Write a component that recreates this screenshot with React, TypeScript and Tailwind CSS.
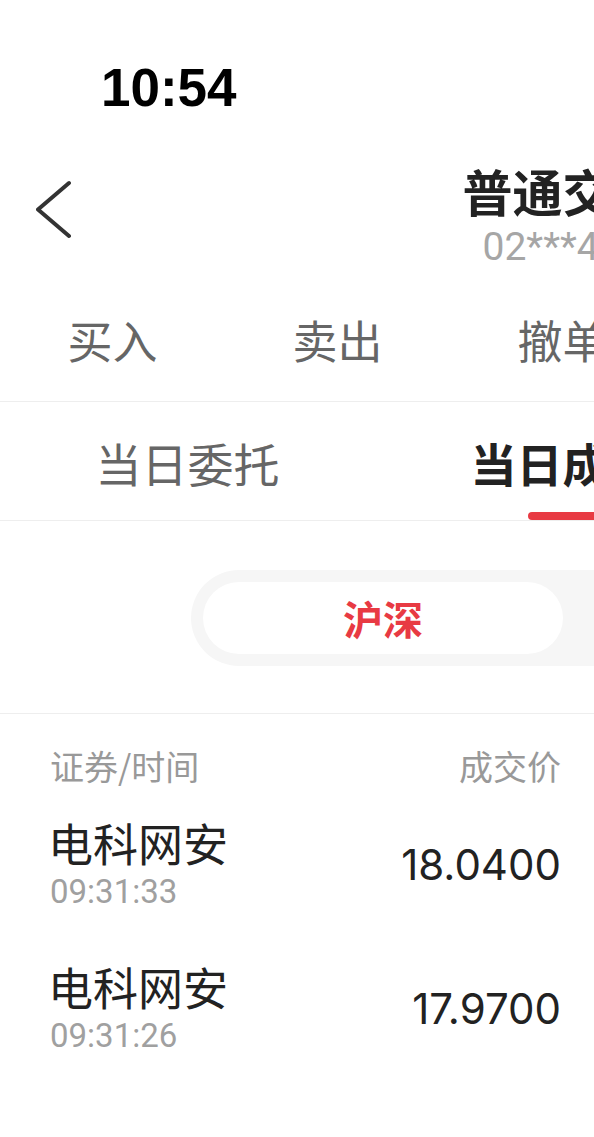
import React from "react";

const CJK = { fontFamily: '"Noto Sans CJK SC", "Noto Sans", sans-serif' };
const NUM = { fontFamily: 'Roboto, "Noto Sans CJK SC", sans-serif' };
const PRICE = { fontFamily: 'Inter, Roboto, "Noto Sans CJK SC", sans-serif' };

function Chevron() {
  return (
    <svg width="36" height="60" viewBox="0 0 36 60" fill="none">
      <path
        d="M33 3 L2 29.5 L33 56"
        stroke="#333333"
        strokeWidth="4"
        strokeLinecap="round"
        strokeLinejoin="round"
      />
    </svg>
  );
}

const tabs = ["买入", "卖出", "撤单", "持仓", "查询"];
const subTabs = ["当日委托", "当日成交", "历史委托"];
const rows = [
  { name: "电科网安", time: "09:31:33", price: "18.0400", vol: "100", amt: "1804.00" },
  { name: "电科网安", time: "09:31:26", price: "17.9700", vol: "100", amt: "1797.00" },
];

export default function App() {
  return (
    <div className="w-[594px] h-[1137px] overflow-hidden bg-white" style={CJK}>
      <div className="w-[1125px]">
        {/* status bar */}
        <div className="h-[140px] pl-[101px] pt-[62px]">
          <span
            className="text-[53px] leading-[52px] font-bold text-black"
            style={{ fontFamily: '"Liberation Sans", Arial, sans-serif' }}
          >
            10:54
          </span>
        </div>

        {/* nav bar */}
        <div className="h-[150px] grid grid-cols-[1fr_auto_1fr]">
          <div className="pl-[36px] pt-[40px]">
            <Chevron />
          </div>
          <div className="flex flex-col items-center pt-[22px]">
            <div className="text-[50px] leading-[56px] font-bold text-[#222222]">普通交易</div>
            <div className="text-[39px] leading-[48px] mt-[5px] text-[#a6a6a6]" style={NUM}>
              02***456
            </div>
          </div>
          <div />
        </div>

        {/* main tabs */}
        <div className="h-[112px] flex border-b border-[#eeeeee]">
          {tabs.map((t) => (
            <div key={t} className="w-[225px] flex justify-center pt-[22px]">
              <span className="text-[45px] leading-[56px] text-[#666666]">{t}</span>
            </div>
          ))}
        </div>

        {/* sub tabs */}
        <div className="h-[119px] flex border-b border-[#eeeeee]">
          {subTabs.map((t, i) => (
            <div key={t} className="w-[375px] flex flex-col items-center pt-[32px]">
              <span
                className={
                  i === 1
                    ? "text-[46px] leading-[56px] font-bold text-[#222222]"
                    : "text-[46px] leading-[56px] text-[#666666]"
                }
              >
                {t}
              </span>
              <div className="flex-1" />
              {i === 1 ? (
                <div className="w-[70px] h-[8px] rounded-full bg-[#e83a43]" />
              ) : null}
            </div>
          ))}
        </div>

        {/* segmented */}
        <div className="pt-[49px] pb-[47px] flex justify-center border-b border-[#eeeeee]">
          <div className="w-[743px] h-[96px] p-[12px] rounded-full bg-[#f6f6f6] flex">
            <div className="w-[360px] h-[72px] rounded-full bg-white flex items-center justify-center">
              <span className="text-[40px] leading-[48px] font-bold text-[#e83a43]">沪深</span>
            </div>
            <div className="flex-1 flex items-center justify-center">
              <span className="text-[40px] leading-[48px] text-[#666666]">港股通</span>
            </div>
          </div>
        </div>

        {/* header */}
        <div className="pt-[32px] pb-[31px] pl-[50px] flex text-[34px] leading-[40px] text-[#999999]">
          <div className="w-[511px] flex justify-between">
            <span>证券/时间</span>
            <span>成交价</span>
          </div>
          <div className="w-[270px] text-right">成交量</div>
          <div className="w-[270px] text-right">成交金额</div>
        </div>

        {/* rows */}
        {rows.map((r, idx) => (
          <div key={idx} className="h-[144px] pl-[50px] flex items-start">
            <div className="w-[511px] flex items-center justify-between">
              <div className="flex flex-col">
                <span className="text-[45px] leading-[52px] -ml-[2px] text-[#222222]">{r.name}</span>
                <span className="text-[33px] leading-[40px] mt-[3px] text-[#a0a0a0]" style={NUM}>
                  {r.time}
                </span>
              </div>
              <span className="text-[42px] leading-[50px] text-[#222222]" style={PRICE}>
                {r.price}
              </span>
            </div>
            <div className="w-[270px] self-center text-right text-[42px] leading-[50px] text-[#222222]" style={PRICE}>
              {r.vol}
            </div>
            <div className="w-[270px] self-center text-right text-[42px] leading-[50px] text-[#222222]" style={PRICE}>
              {r.amt}
            </div>
          </div>
        ))}
      </div>
    </div>
  );
}
